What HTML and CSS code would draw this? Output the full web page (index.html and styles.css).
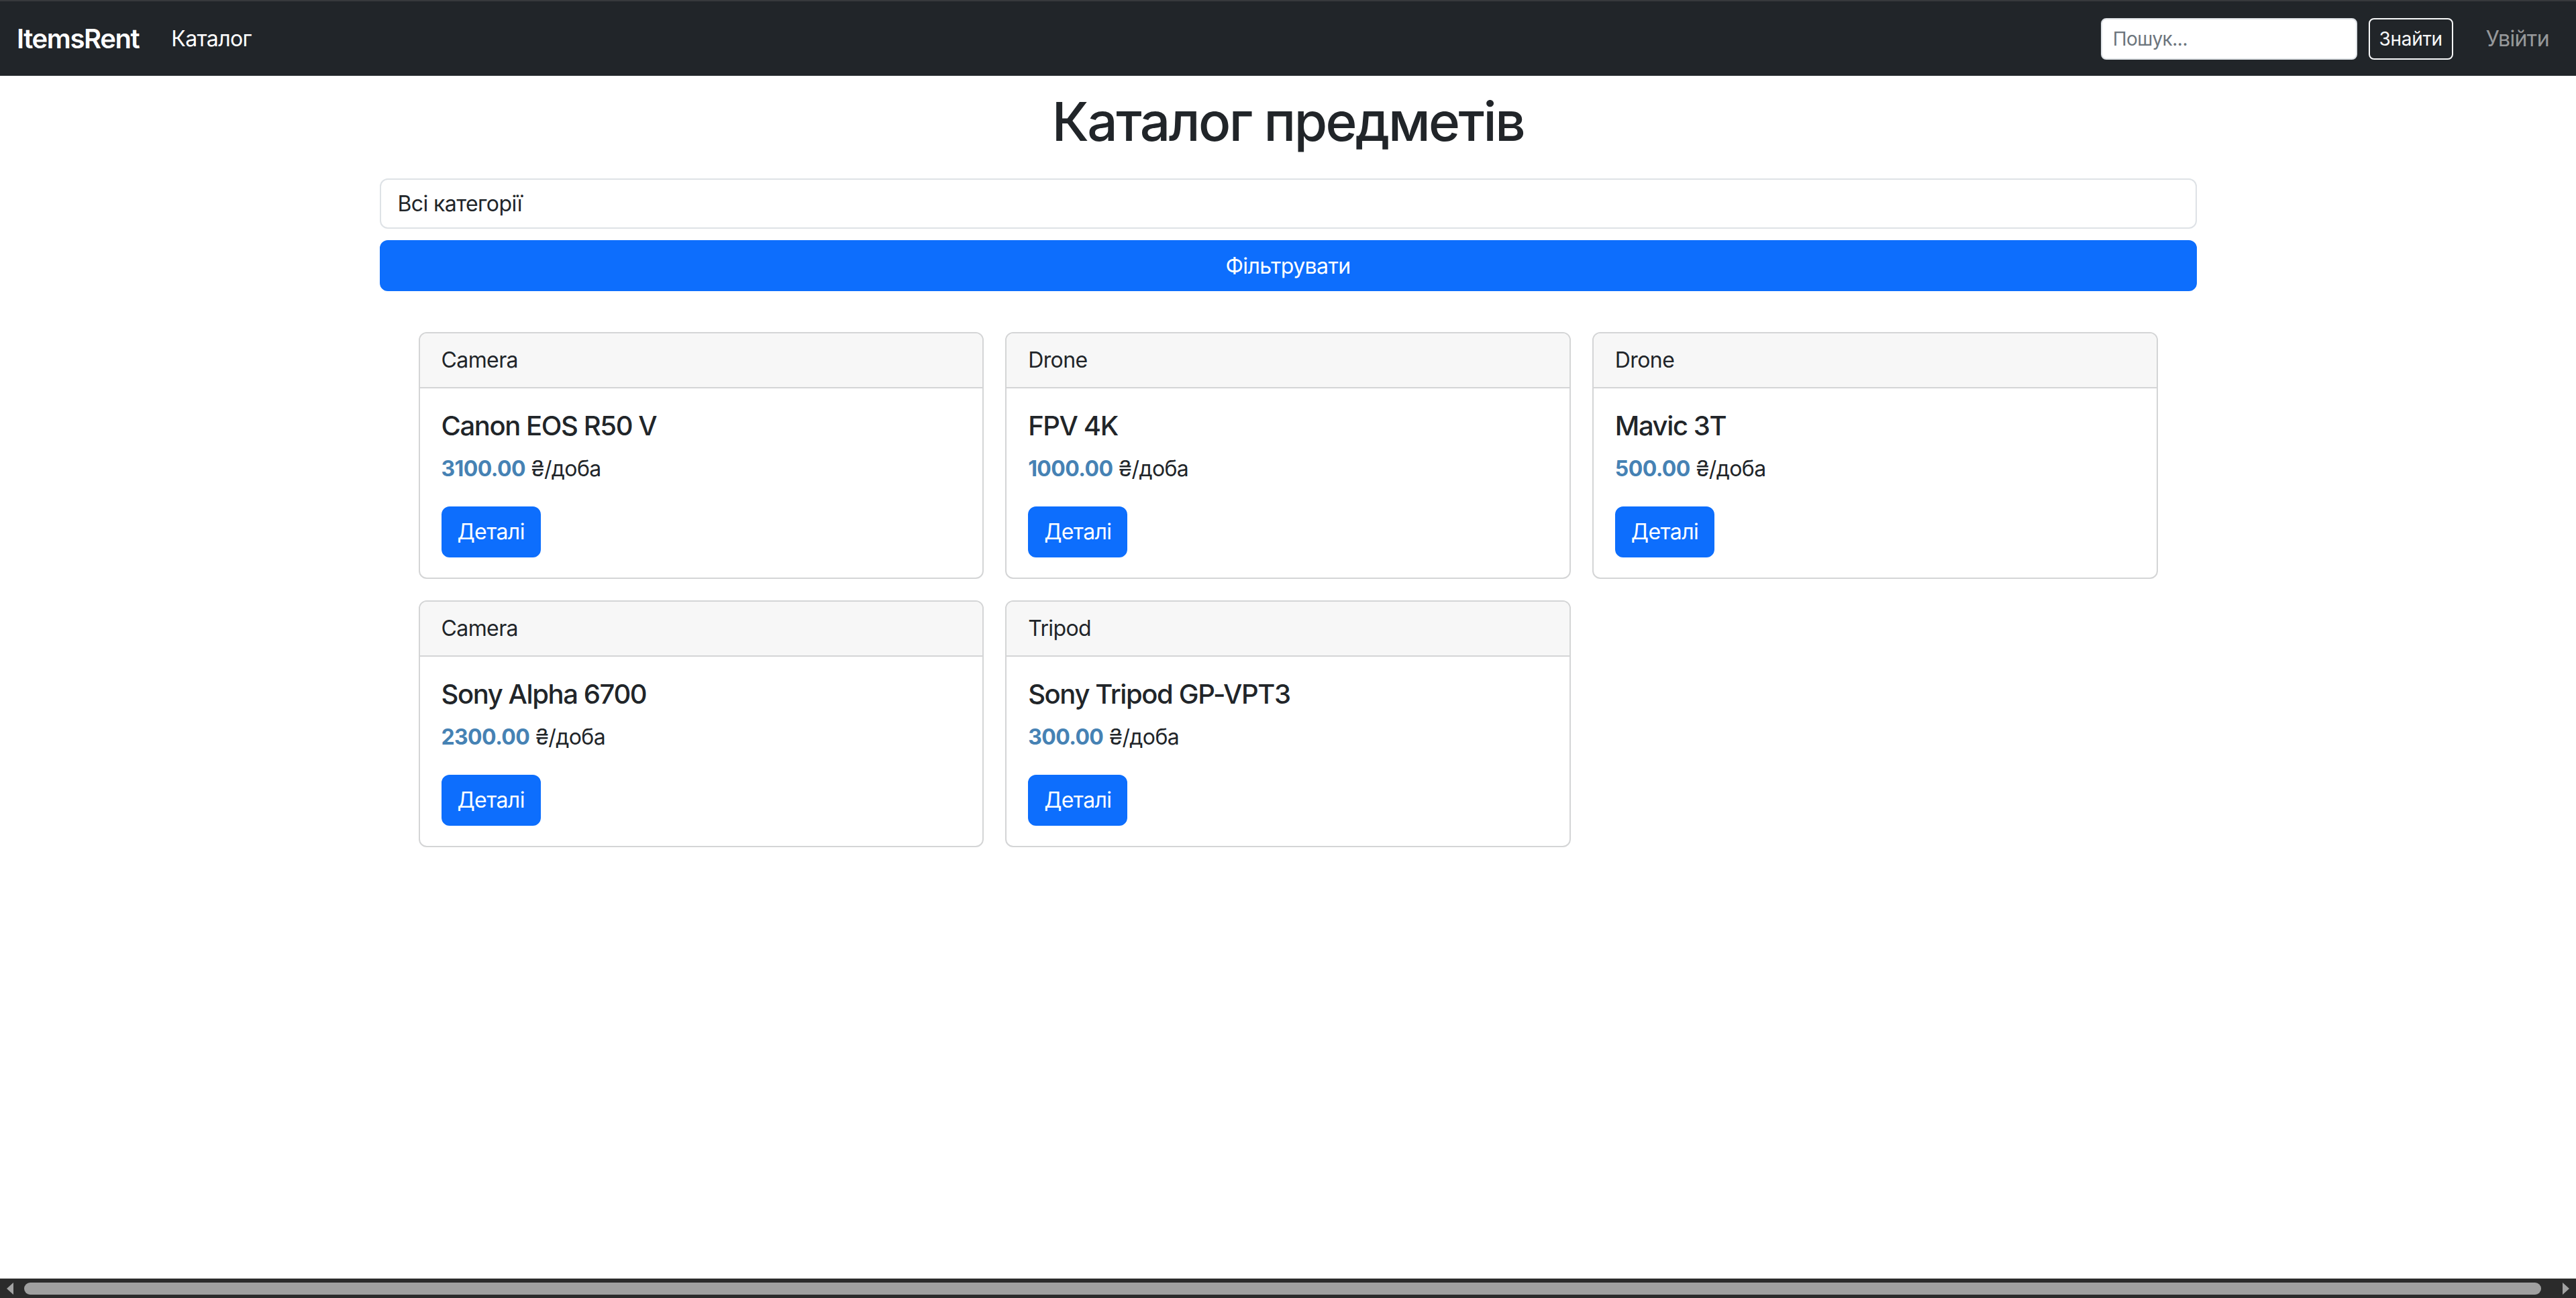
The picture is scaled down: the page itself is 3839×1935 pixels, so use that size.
FILE: index.html
```html
<!DOCTYPE html>
<html lang="uk">
<head>
<meta charset="utf-8">
<title>ItemsRent — Каталог</title>
<link rel="stylesheet" href="styles.css">
</head>
<body>
<nav class="navbar">
  <div class="nav-left">
    <a class="brand" href="#">ItemsRent</a>
    <a class="nav-link active" href="#">Каталог</a>
  </div>
  <div class="nav-right">
    <form class="search">
      <input class="search-input" type="text" placeholder="Пошук...">
      <button class="btn-outline" type="button">Знайти</button>
    </form>
    <a class="nav-link muted" href="#">Увійти</a>
  </div>
</nav>

<main class="page">
  <h1 class="title">Каталог предметів</h1>

  <form class="filter">
    <select class="filter-select">
      <option>Всі категорії</option>
    </select>
    <button class="btn-primary btn-block" type="button">Фільтрувати</button>
  </form>

  <div class="grid">
    <div class="card">
      <div class="card-header">Camera</div>
      <div class="card-body">
        <h5 class="card-title">Canon EOS R50 V</h5>
        <p class="price"><strong>3100.00</strong> ₴/доба</p>
        <a class="btn-primary" href="#">Деталі</a>
      </div>
    </div>
    <div class="card">
      <div class="card-header">Drone</div>
      <div class="card-body">
        <h5 class="card-title">FPV 4K</h5>
        <p class="price"><strong>1000.00</strong> ₴/доба</p>
        <a class="btn-primary" href="#">Деталі</a>
      </div>
    </div>
    <div class="card">
      <div class="card-header">Drone</div>
      <div class="card-body">
        <h5 class="card-title">Mavic 3T</h5>
        <p class="price"><strong>500.00</strong> ₴/доба</p>
        <a class="btn-primary" href="#">Деталі</a>
      </div>
    </div>
    <div class="card">
      <div class="card-header">Camera</div>
      <div class="card-body">
        <h5 class="card-title">Sony Alpha 6700</h5>
        <p class="price"><strong>2300.00</strong> ₴/доба</p>
        <a class="btn-primary" href="#">Деталі</a>
      </div>
    </div>
    <div class="card">
      <div class="card-header">Tripod</div>
      <div class="card-body">
        <h5 class="card-title">Sony Tripod GP-VPT3</h5>
        <p class="price"><strong>300.00</strong> ₴/доба</p>
        <a class="btn-primary" href="#">Деталі</a>
      </div>
    </div>
  </div>
</main>

<div class="hscroll">
  <span class="arrow arrow-left"></span>
  <span class="thumb"></span>
  <span class="arrow arrow-right"></span>
</div>
</body>
</html>
```

FILE: styles.css
```css
* { box-sizing: border-box; }

html, body {
  margin: 0;
  padding: 0;
  background: #fff;
}

body {
  font-family: Inter, "Noto Sans", sans-serif;
  font-size: 32px;
  line-height: 1.5;
  letter-spacing: -0.6px;
  color: #212529;
  overflow: hidden;
  height: 1935px;
}

a { text-decoration: none; }

/* ---------- navbar ---------- */
.navbar {
  height: 113px;
  background: #212529;
  border-top: 2px solid #37393c;
  display: flex;
  align-items: center;
  justify-content: space-between;
  padding: 0 24px 0 25px;
}

.nav-left, .nav-right {
  display: flex;
  align-items: center;
}

.brand {
  color: #fff;
  font-size: 40px;
  font-weight: 600;
  line-height: 60px;
  margin-right: 32px;
  letter-spacing: -1.4px;
}

.nav-link {
  font-size: 32px;
  line-height: 48px;
  padding: 0 16px;
}

.nav-link.active { color: #fff; }
.nav-link.muted { color: rgba(255, 255, 255, 0.55); }

.search {
  display: flex;
  align-items: center;
  gap: 17px;
  margin-right: 33px;
}

.search-input {
  width: 382px;
  height: 62px;
  border: 2px solid #dee2e6;
  border-radius: 8px;
  background: #fff;
  padding: 0 16px;
  font-family: inherit;
  font-size: 28px;
  letter-spacing: -0.5px;
  color: #212529;
  outline: none;
}

.search-input::placeholder { color: #6c757d; }

.btn-outline {
  height: 62px;
  width: 126px;
  padding: 0 10px;
  border: 2px solid #f8f9fa;
  border-radius: 8px;
  background: transparent;
  color: #f8f9fa;
  font-family: inherit;
  font-size: 28px;
  letter-spacing: -0.3px;
}

/* ---------- page ---------- */
.page {
  display: flex;
  flex-direction: column;
  align-items: center;
}

.title {
  margin: 20px 0 0;
  font-size: 80px;
  font-weight: 500;
  line-height: 96px;
  letter-spacing: -2.5px;
  color: #212529;
}

.filter {
  width: 2708px;
  margin-top: 37px;
  display: flex;
  flex-direction: column;
  gap: 17px;
}

.filter-select {
  appearance: none;
  -webkit-appearance: none;
  width: 100%;
  height: 75px;
  border: 2px solid #dee2e6;
  border-radius: 12px;
  background: #fff;
  padding: 0 72px 0 25px;
  font-family: inherit;
  font-size: 32px;
  letter-spacing: -0.6px;
  color: #212529;
  outline: none;
}

.btn-primary {
  display: inline-flex;
  align-items: center;
  justify-content: center;
  height: 76px;
  padding: 0 22px;
  border: 2px solid #0d6efd;
  border-radius: 12px;
  background: #0d6efd;
  color: #fff;
  font-family: inherit;
  font-size: 32px;
  letter-spacing: -0.6px;
}

.btn-block { width: 100%; }

.grid {
  width: 2592px;
  margin-top: 61px;
  display: grid;
  grid-template-columns: repeat(3, 1fr);
  gap: 32px;
  align-items: start;
}

.card {
  border: 2px solid #d4d5d6;
  border-radius: 12px;
  overflow: hidden;
  background: #fff;
}

.card-header {
  background: #f7f7f7;
  border-bottom: 2px solid #d4d5d6;
  padding: 16px 32px;
  line-height: 48px;
  font-size: 32px;
}

.card-body {
  padding: 32px 32px 30px;
}

.card-title {
  margin: 0 0 16px;
  font-size: 40px;
  font-weight: 500;
  line-height: 48px;
  letter-spacing: -1.4px;
}

.price {
  margin: 0 0 32px;
  line-height: 48px;
}

.price strong {
  color: #4682b4;
  font-weight: 700;
}

/* ---------- horizontal scrollbar ---------- */
.hscroll {
  position: fixed;
  left: 0;
  right: 0;
  bottom: 0;
  height: 29px;
  background: #2b2b2b;
}

.thumb {
  position: absolute;
  left: 36px;
  right: 52px;
  top: 6px;
  height: 18px;
  border-radius: 9px;
  background: #a0a0a0;
}

.arrow {
  position: absolute;
  top: 6px;
  width: 0;
  height: 0;
  border-top: 9px solid transparent;
  border-bottom: 9px solid transparent;
}

.arrow-left {
  left: 10px;
  border-right: 10px solid #a3a3a3;
}

.arrow-right {
  right: 10px;
  border-left: 10px solid #a3a3a3;
}
```
